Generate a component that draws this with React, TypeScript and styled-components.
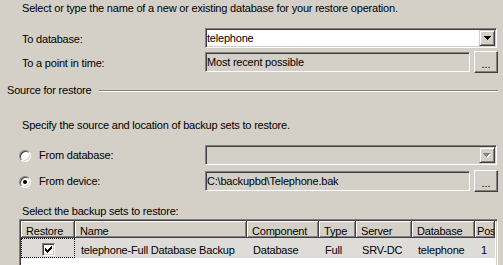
import React from 'react';
import styled, { createGlobalStyle } from 'styled-components';

const GlobalStyle = createGlobalStyle`
  html, body { margin: 0; padding: 0; background: #d4d0c8; }
  body {
    font-family: "Liberation Sans", Arial, sans-serif;
    font-size: 11px;
    letter-spacing: -0.2px;
    color: #000;
  }
  #root { width: 503px; height: 265px; overflow: hidden; }
`;

const Window = styled.div`
  width: 503px;
  height: 265px;
  overflow: hidden;
  background: #d4d0c8;
  display: flex;
  flex-direction: column;
  line-height: 13px;
`;

const TextLine = styled.div<{ $mt: number; $indent: number }>`
  margin-top: ${p => p.$mt}px;
  padding-left: ${p => p.$indent}px;
  height: 13px;
  flex: none;
  white-space: nowrap;
`;

const FormRow = styled.div<{ $mt: number; $h: number }>`
  margin-top: ${p => p.$mt}px;
  height: ${p => p.$h}px;
  flex: none;
  display: grid;
  grid-template-columns: 186px 293px;
  padding-left: 19px;
  align-items: start;
`;

const Label = styled.div<{ $pt: number }>`
  padding: ${p => p.$pt}px 0 0 3px;
  white-space: nowrap;
`;

const RadioLabel = styled.label<{ $pt: number }>`
  display: flex;
  align-items: center;
  gap: 8px;
  padding-top: ${p => p.$pt}px;
  white-space: nowrap;
`;

const RadioCircle = styled.span<{ $checked?: boolean }>`
  box-sizing: border-box;
  flex: none;
  width: 12px;
  height: 12px;
  border-radius: 50%;
  border: 1px solid;
  border-color: #808080 #ffffff #ffffff #808080;
  box-shadow: inset 1px 1px 0 #404040, inset -1px -1px 0 #d4d0c8;
  background: #ffffff;
  display: flex;
  align-items: center;
  justify-content: center;
  &::after {
    content: '';
    display: ${p => (p.$checked ? 'block' : 'none')};
    width: 4px;
    height: 4px;
    border-radius: 50%;
    background: #000;
  }
`;

const FieldGroup = styled.div`
  display: flex;
  align-items: flex-start;
  gap: 4px;
`;

const Field = styled.div<{ $bg: string; $w: number; $mt?: number }>`
  box-sizing: border-box;
  width: ${p => p.$w}px;
  height: 20px;
  margin-top: ${p => p.$mt ?? 0}px;
  border: 1px solid;
  border-color: #808080 #ffffff #ffffff #808080;
  box-shadow: inset 1px 1px 0 #404040, inset -1px -1px 0 #d4d0c8;
  background: ${p => p.$bg};
  display: flex;
  align-items: flex-start;
  overflow: hidden;
`;

const FieldText = styled.span`
  flex: 1;
  padding: 3px 0 0 1px;
  white-space: nowrap;
  overflow: hidden;
`;

const DropButton = styled.span`
  box-sizing: border-box;
  flex: none;
  width: 16px;
  height: 16px;
  margin: 1px 1px 0 0;
  border: 1px solid;
  border-color: #d4d0c8 #404040 #404040 #d4d0c8;
  box-shadow: inset 1px 1px 0 #ffffff, inset -1px -1px 0 #808080;
  background: #d4d0c8;
  display: flex;
  align-items: center;
  justify-content: center;
`;

const EllipsisButton = styled.button`
  box-sizing: border-box;
  flex: none;
  width: 24px;
  height: 22px;
  margin: 0;
  padding: 5px 0 0 0;
  border: 1px solid;
  border-color: #ffffff #404040 #404040 #ffffff;
  box-shadow: inset -1px -1px 0 #808080, inset 1px 1px 0 #d4d0c8;
  background: #d4d0c8;
  font: inherit;
  line-height: 13px;
  letter-spacing: 0;
  color: #000;
  text-align: center;
  display: block;
`;

const GroupHeader = styled.div`
  margin-top: 11px;
  height: 13px;
  flex: none;
  display: flex;
  gap: 8px;
  padding: 0 5px 0 7px;
  white-space: nowrap;
`;

const GroupRule = styled.div`
  flex: 1;
  margin-top: 6px;
  height: 0;
  border-top: 1px solid #808080;
  border-bottom: 1px solid #ffffff;
`;

const Grid = styled.div`
  margin: 1px 5px 0 19px;
  height: 70px;
  flex: none;
  box-sizing: border-box;
  border: 1px solid;
  border-color: #808080 #ffffff #ffffff #808080;
  box-shadow: inset 1px 1px 0 #404040, inset -1px -1px 0 #d4d0c8;
  padding: 1px;
  background: #ffffff;
  overflow: hidden;
`;

const GridRow = styled.div`
  display: flex;
`;

const HeaderCell = styled.div<{ $w: number; $pad: number }>`
  box-sizing: border-box;
  flex: none;
  width: ${p => p.$w}px;
  height: 17px;
  padding: 4px 0 0 ${p => p.$pad}px;
  background: #d4d0c8;
  border-right: 1px solid #404040;
  border-bottom: 1px solid #404040;
  box-shadow: inset 1px 1px 0 #ffffff, inset -1px -1px 0 #808080;
  overflow: hidden;
  white-space: nowrap;
`;

const DataCell = styled.div<{ $w: number }>`
  box-sizing: border-box;
  flex: none;
  width: ${p => p.$w}px;
  height: 20px;
  padding: 6px 0 0 6px;
  background: #dedcd8;
  overflow: hidden;
  white-space: nowrap;
`;

const FocusCell = styled.div<{ $w: number }>`
  box-sizing: border-box;
  flex: none;
  width: ${p => p.$w}px;
  height: 20px;
  padding-top: 4px;
  border: 1px dotted #000;
  background: #dedcd8;
  display: flex;
  justify-content: center;
  align-items: flex-start;
`;

const CheckBox = styled.span`
  box-sizing: border-box;
  width: 13px;
  height: 13px;
  border: 1px solid;
  border-color: #808080 #ffffff #ffffff #808080;
  box-shadow: inset 1px 1px 0 #404040, inset -1px -1px 0 #d4d0c8;
  background: #ffffff;
  display: flex;
  align-items: center;
  justify-content: center;
`;

const ArrowPath = 'M0 0h7v1h-1v1h-1v1h-1v1h-1v-1h-1v-1h-1v-1h-1z';

const DownArrow: React.FC<{ disabled?: boolean }> = ({ disabled }) =>
  disabled ? (
    <svg width="8" height="5" viewBox="0 0 8 5" shapeRendering="crispEdges">
      <path d={ArrowPath} transform="translate(1 1)" fill="#ffffff" />
      <path d={ArrowPath} fill="#808080" />
    </svg>
  ) : (
    <svg width="7" height="4" viewBox="0 0 7 4" shapeRendering="crispEdges">
      <path d={ArrowPath} fill="#000" />
    </svg>
  );

const CheckMark: React.FC = () => (
  <svg width="7" height="7" viewBox="0 0 7 7" shapeRendering="crispEdges">
    <path
      fill="#000"
      d="M6 0h1v1h-1z M5 1h2v1h-2z M0 2h1v1h-1z M4 2h3v1h-3z M0 3h2v1h-2z M3 3h3v1h-3z M0 4h5v1h-5z M1 5h3v1h-3z M2 6h1v1h-1z"
    />
  </svg>
);

const columns = [
  { title: 'Restore', w: 54, pad: 5 },
  { title: 'Name', w: 172, pad: 5 },
  { title: 'Component', w: 72, pad: 5 },
  { title: 'Type', w: 37, pad: 5 },
  { title: 'Server', w: 56, pad: 5 },
  { title: 'Database', w: 63, pad: 5 },
  { title: 'Pos', w: 20, pad: 2 },
];

const rowData = ['telephone-Full Database Backup', 'Database', 'Full', 'SRV-DC', 'telephone', '1'];

export default function App() {
  return (
    <>
      <GlobalStyle />
      <Window>
        <TextLine $mt={2} $indent={22}>
          Select or type the name of a new or existing database for your restore operation.
        </TextLine>

        <FormRow $mt={13} $h={20}>
          <Label $pt={5}>To database:</Label>
          <Field $bg="#ffffff" $w={292}>
            <FieldText>telephone</FieldText>
            <DropButton>
              <DownArrow />
            </DropButton>
          </Field>
        </FormRow>

        <FormRow $mt={3} $h={22}>
          <Label $pt={6}>To a point in time:</Label>
          <FieldGroup>
            <Field $bg="#d4d0c8" $w={265} $mt={1}>
              <FieldText>Most recent possible</FieldText>
            </Field>
            <EllipsisButton>...</EllipsisButton>
          </FieldGroup>
        </FormRow>

        <GroupHeader>
          <span>Source for restore</span>
          <GroupRule />
        </GroupHeader>

        <TextLine $mt={22} $indent={22}>
          Specify the source and location of backup sets to restore.
        </TextLine>

        <FormRow $mt={13} $h={20}>
          <RadioLabel $pt={4}>
            <RadioCircle />
            From database:
          </RadioLabel>
          <Field $bg="#d4d0c8" $w={292}>
            <FieldText />
            <DropButton>
              <DownArrow disabled />
            </DropButton>
          </Field>
        </FormRow>

        <FormRow $mt={5} $h={22}>
          <RadioLabel $pt={5}>
            <RadioCircle $checked />
            From device:
          </RadioLabel>
          <FieldGroup>
            <Field $bg="#d4d0c8" $w={265} $mt={1}>
              <FieldText>C:\backupbd\Telephone.bak</FieldText>
            </Field>
            <EllipsisButton>...</EllipsisButton>
          </FieldGroup>
        </FormRow>

        <TextLine $mt={13} $indent={22}>
          Select the backup sets to restore:
        </TextLine>

        <Grid>
          <GridRow>
            {columns.map(c => (
              <HeaderCell key={c.title} $w={c.w} $pad={c.pad}>
                {c.title}
              </HeaderCell>
            ))}
          </GridRow>
          <GridRow>
            <FocusCell $w={columns[0].w}>
              <CheckBox>
                <CheckMark />
              </CheckBox>
            </FocusCell>
            {rowData.map((v, i) => (
              <DataCell key={i} $w={columns[i + 1].w}>
                {v}
              </DataCell>
            ))}
          </GridRow>
        </Grid>
      </Window>
    </>
  );
}
